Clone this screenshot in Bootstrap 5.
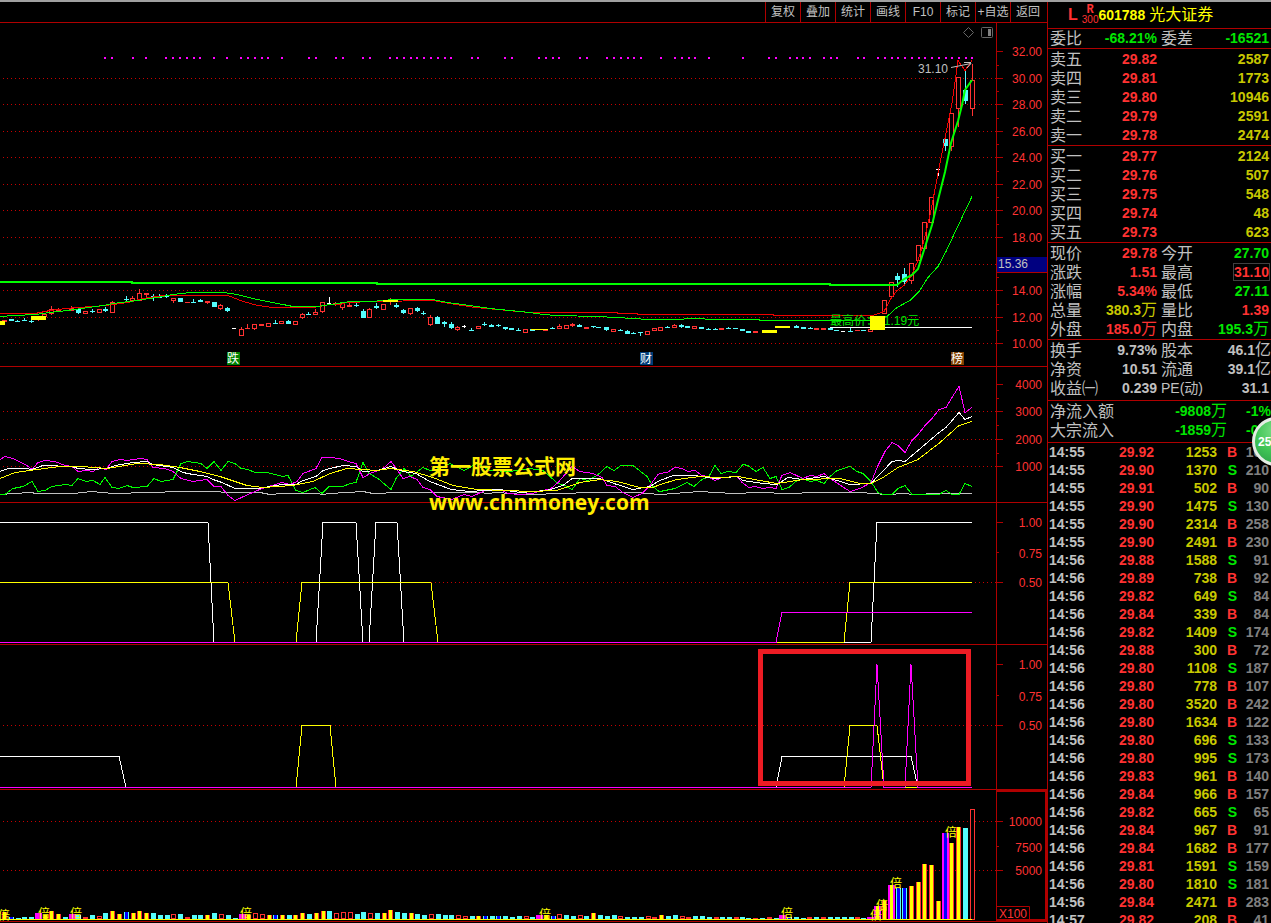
<!DOCTYPE html>
<html lang="zh-CN">
<head>
<meta charset="utf-8">
<meta name="viewport" content="width=device-width, initial-scale=1">
<title>601788 光大证券</title>
<link href="https://cdn.jsdelivr.net/npm/bootstrap@5.3.0/dist/css/bootstrap.min.css" rel="stylesheet">
<style>
  :root { --line:#b00000; --up:#ff3232; --down:#00e600; --vol:#c8c800; --ink:#c0c0c0; }
  body { background:#000; color:var(--ink); font-family:"Liberation Sans","Noto Sans CJK SC",sans-serif; font-size:14px; }
  .frame { border-top:2px solid #a0a0a0; }
  .toolbar { height:21px; border-bottom:1px solid var(--line); padding-right:2px; }
  .toolbar button { width:35px; padding:0; border:0; border-left:1px solid var(--line); background:none; color:var(--ink); font-size:12px; line-height:20px; white-space:nowrap; }
  .pane { border-bottom:1px solid var(--line); }
  .plot { min-width:0; }
  .plot svg, .scale svg { display:block; width:100%; }
  .scale { width:51px; border-left:1px solid var(--line); }
  .pane svg text { font-size:12px; }
  .scale text { fill:var(--up); text-anchor:end; }
  .h-price { height:343px; } .h-net { height:135px; } .h-sig { height:141px; } .h-buy { height:144px; } .h-volume { height:131px; }
  .side { width:224px; border-left:1px solid var(--line); }
  .side header { height:27px; border-bottom:1px solid var(--line); padding-left:20px; }
  .side table { width:100%; table-layout:fixed; border-collapse:separate; border-spacing:0; font-weight:700; white-space:nowrap; }
  .side th, .side td { padding:0; height:19px; line-height:19px; }
  .side th { font-size:16px; font-weight:400; padding-left:2px; }
  .side td { text-align:right; }
  .side td:last-child { padding-right:2px; }
  .side td.flush { padding-right:0; }
  .side th.latin { font-size:14px; }
  .block { border-bottom:1px solid var(--line); padding-top:1px; }
  .block.roomy { padding-bottom:2px; }
  .unit { font-size:16px; font-weight:400; line-height:1; }
  .ticks td { height:18px; line-height:18px; }
  .ticks td:first-child { text-align:left; padding-left:1px; }
  .up { color:var(--up); } .dn { color:var(--down); } .vo { color:var(--vol); } .dim { color:#808080; }
  .peak { outline:1px solid #404040; }
  .stock { color:#ff0; }
  .stock .name { font-size:16px; font-weight:400; }
  .flag-l { font-size:16px; } .flag-r { font:700 12px/10px "Liberation Mono",monospace; } .flag-n { font-size:10px; line-height:10px; }
  .orb { right:-30px; top:415px; width:49px; height:49px; border:3px solid #e4ece4; border-radius:50%; background:radial-gradient(circle at 50% 25%,#7fe08a,#3fc455 55%,#2c9c48); color:#fff; font-size:12px; font-weight:700; line-height:42px; padding:0 0 0 3px; text-align:left; }
</style>
</head>
<body class="vh-100 overflow-hidden">
<div class="frame d-flex vh-100 overflow-hidden position-relative">
  <main class="flex-grow-1 plot">
    <nav class="toolbar d-flex justify-content-end">
      <button type="button">复权</button><button type="button">叠加</button><button type="button">统计</button><button type="button">画线</button><button type="button">F10</button><button type="button">标记</button><button type="button">+自选</button><button type="button">返回</button>
    </nav>
    <section class="pane d-flex">
      <div class="plot flex-grow-1"><svg id="price" class="h-price" viewBox="0 23 996 343" preserveAspectRatio="xMaxYMin meet"></svg></div>
      <div class="scale"><svg id="priceScale" class="h-price" viewBox="997 23 50 343"></svg></div>
    </section>
    <section class="pane d-flex">
      <div class="plot flex-grow-1"><svg id="net" class="h-net overflow-visible" viewBox="0 367 996 135" preserveAspectRatio="xMaxYMin meet"></svg></div>
      <div class="scale"><svg id="netScale" class="h-net" viewBox="997 367 50 135"></svg></div>
    </section>
    <section class="pane d-flex">
      <div class="plot flex-grow-1"><svg id="sig" class="h-sig" viewBox="0 503 996 141" preserveAspectRatio="xMaxYMin meet"></svg></div>
      <div class="scale"><svg id="sigScale" class="h-sig" viewBox="997 503 50 141"></svg></div>
    </section>
    <section class="pane d-flex">
      <div class="plot flex-grow-1"><svg id="buy" class="h-buy" viewBox="0 645 996 144" preserveAspectRatio="xMaxYMin meet"></svg></div>
      <div class="scale"><svg id="buyScale" class="h-buy" viewBox="997 645 50 144"></svg></div>
    </section>
    <section class="pane d-flex">
      <div class="plot flex-grow-1"><svg id="volume" class="h-volume" viewBox="0 790 996 131" preserveAspectRatio="xMaxYMin meet"></svg></div>
      <div class="scale"><svg id="volumeScale" class="h-volume" viewBox="997 790 50 131"></svg></div>
    </section>
  </main>

  <aside class="side flex-shrink-0">
    <header class="d-flex align-items-center stock">
      <span class="flag-l up fw-bold me-1">L</span>
      <span class="d-flex flex-column align-items-center up"><b class="flag-r">R</b><span class="flag-n">300</span></span>
      <b class="me-1">601788</b><span class="name">光大证券</span>
    </header>
    <div class="block pt-0">
      <table><colgroup><col style="width:34px"><col style="width:75px"><col style="width:38px"><col></colgroup>
        <tr><th>委比</th><td class="dn">-68.21%</td><th class="ps-1">委差</th><td class="dn">-16521</td></tr></table>
    </div>
    <div class="block"><table id="asks"></table></div>
    <div class="block"><table id="bids"></table></div>
    <div class="block">
      <table><colgroup><col style="width:34px"><col style="width:75px"><col style="width:38px"><col></colgroup>
        <tr><th>现价</th><td class="up">29.78</td><th class="ps-1">今开</th><td class="dn">27.70</td></tr>
        <tr><th>涨跌</th><td class="up">1.51</td><th class="ps-1">最高</th><td class="up"><span class="peak">31.10</span></td></tr>
        <tr><th>涨幅</th><td class="up">5.34%</td><th class="ps-1">最低</th><td class="dn">27.11</td></tr>
        <tr><th>总量</th><td class="vo">380.3<span class="unit">万</span></td><th class="ps-1">量比</th><td class="up">1.39</td></tr>
        <tr><th>外盘</th><td class="up">185.0<span class="unit">万</span></td><th class="ps-1">内盘</th><td class="dn">195.3<span class="unit">万</span></td></tr></table>
    </div>
    <div class="block roomy">
      <table><colgroup><col style="width:50px"><col style="width:59px"><col style="width:48px"><col></colgroup>
        <tr><th>换手</th><td>9.73%</td><th class="ps-1">股本</th><td class="flush">46.1<span class="unit">亿</span></td></tr>
        <tr><th>净资</th><td>10.51</td><th class="ps-1">流通</th><td class="flush">39.1<span class="unit">亿</span></td></tr>
        <tr><th>收益㈠</th><td>0.239</td><th class="ps-1 latin">PE(动)</th><td>31.1</td></tr></table>
    </div>
    <div class="block roomy">
      <table><colgroup><col style="width:70px"><col style="width:109px"><col></colgroup>
        <tr><th>净流入额</th><td class="dn">-9808<span class="unit">万</span></td><td class="dn flush">-1%</td></tr>
        <tr><th>大宗流入</th><td class="dn">-1859<span class="unit">万</span></td><td class="dn flush">-0%</td></tr></table>
    </div>
    <table class="ticks" id="ticks"><colgroup><col style="width:60px"><col style="width:46px"><col style="width:63px"><col style="width:20px"><col></colgroup></table>
  </aside>
  <button type="button" class="orb position-absolute">25</button>
</div>

<script src="https://cdn.jsdelivr.net/npm/bootstrap@5.3.0/dist/js/bootstrap.bundle.min.js"></script>
<script>
const RED='#ff3232', CYAN='#54fcfc', LINE='#b00000', MAG='#ff00ff', YEL='#ffff00', GRN='#00ff00';
const $ = id => document.getElementById(id);
const rect = (x,y,w,h,f,extra='') => `<rect x="${x}" y="${y}" width="${w}" height="${h}" fill="${f}" ${extra}/>`;
const hollow = (x,y,w,h,c) => `<rect x="${x+.5}" y="${y+.5}" width="${w-1}" height="${Math.max(h-1,1)}" fill="#000" stroke="${c}"/>`;
const poly = (pts,c,w=1) => `<polyline points="${pts.map(p=>p.join()).join(' ')}" fill="none" stroke="${c}" stroke-width="${w}" shape-rendering="crispEdges"/>`;
const text = (x,y,s,c,extra='') => `<text x="${x}" y="${y}" fill="${c}" ${extra}>${s}</text>`;
const grid = ys => ys.map(y=>`<path d="M3 ${y+.5}H996" stroke="#c80000" stroke-dasharray="1 3" shape-rendering="crispEdges"/>`).join('');
/* curve samples are kept in thirds of a pixel, relative to the origin of their segment */
const curve = segs => segs.flatMap(([ox,oy,s]) => s.trim().split(/\s+/).map(p=>{const [x,y]=p.split(',');return [Math.round(ox+x/3),Math.floor(oy+y/3)+.5];}));

/* price pane */
/* centre, body top, body bottom, type, high, low; r rising, f small rising, c falling, w unchanged */
const candles = [
 [0,270,`13,150,156,r 34,147,153,c 51,153,156,c,150 73,150,153,c,144 94,153,156,c,149,158 115,138,150,f,138,153 133,133,141,r 154,118,132,r,108,135 175,117,123,f,114 214,114,122,f,108 235,117,129,c,117,132 256,123,132,r 277,123,126,c,117,129 298,117,129,r 316,117,123,c,112,126 337,96,129,r,93 358,96,99,f 379,87,90,c,78,93 397,84,93,r,78 418,69,92,r,57 439,69,75,f,69,81 460,78,81,c,72,93 478,80,83,c,72,84 499,78,81,c,72,84 520,84,93,r,84,98 541,84,96,c 562,96,99,f 580,96,99,c,87 601,90,96,c,87 622,94,99,f,94,102 643,96,111,c 661,105,117,r,102,120 682,114,123,c,110,126 702,174,177,w 724,177,198,r,171 742,174,177,f,162 763,162,177,r,162,180 784,162,168,f 805,159,171,r 826,159,162,c,150 844,153,162,r 865,153,162,c,150 886,153,165,r 907,132,144,r,129,147 925,132,135,c,126 946,126,135,r,117 967,96,126,r,96,129 988,99,102,w,81 1006,99,102,f,95,107`],
 [330,270,`37,99,114,r,99,120 58,105,110,f,98 79,105,108,c,99,111 100,123,144,c,117 118,117,144,r,114 139,108,114,c,99,117 160,102,120,r 181,90,93,f,84,105 199,105,111,c,99,114 220,120,129,c,117,132 241,114,132,r,114,135 262,114,123,c,111,126 280,129,132,c,123,135 301,141,165,r,135,168 322,141,162,c,138 343,156,162,c,153,171 364,162,174,c,156,177 382,171,180,r,168,183 403,168,171,w,165,174 424,180,183,c,174 445,168,177,r 463,162,165,c,156,168 484,165,171,c,162 505,165,168,c,162,171 526,171,177,c,171,180 544,174,180,c 565,180,183,c,174 586,177,189,r 607,177,183,c 646,177,183,f 667,174,177,c,171 688,168,177,r,162 709,165,177,r 727,162,168,f,159,171 748,165,171,c,162 769,171,177,f 790,168,171,c,168,174 805,171,174,c 829,171,180,c,171,183 850,177,186,r 871,180,183,c,177 892,183,192,c,180 910,189,192,c,186 931,186,189,c,186,198 952,183,195,r 973,174,183,r 991,171,183,r 1012,171,174,c,168`],
 [660,270,`43,165,174,r,162 64,165,171,c,162,174 82,168,174,c 103,168,177,r 124,171,177,c 145,177,180,c,174 166,177,180,c,174 184,174,180,f 205,174,177,c,171 226,174,177,c 247,177,183,c 265,183,189,c 286,183,189,f 409,168,174,c,165 430,171,177,c 451,174,177,c,171 469,174,180,f 490,174,180,f 511,174,180,c 528,180,183,c 549,183,186,w 571,183,186,c,174 592,180,184,f 610,180,183,c 631,177,186,r`],
 [820,50,`193,751,791,r 214,697,740,r 232,678,690,c,669,710 253,672,696,c,654,702 274,640,694,r,640,702 295,586,632,r 313,517,596,r 334,442,518,r 355,357,360,w,357,378 376,267,288,c,264,303 395,190,290,r,190,302 415,82,178,r,82,230 436,120,153,c,62,162 457,91,176,r,41,197`]];
let s = grid([78,104,131,157,184,210,237,264,290,317,343]);
for (const [ox,oy,d] of candles) for (const item of d.split(/\s+/)) {
  const [cx,a,b,t,hi,lo] = item.split(',');
  const x=Math.floor(ox+cx/3), Y=v=>Math.round(oy+v/3), y=Y(a), h=Math.max(1,Y(b)-y), c=t=='c'?CYAN:t=='w'?'#fff':RED;
  const top=Y(hi||a), bot=Y(lo||b);
  s += rect(x,top,1,Math.max(1,bot-top),c);
  s += t=='r' ? hollow(x-2,y,5,h,c) : rect(x-2,y,t=='w'?4:5,h,c);
}
s += poly(curve([[0,270,`0,130 105,130 150,121 225,113 288,110 340,103 385,97 430,86 490,77 685,77 730,94 775,107 820,112 940,112 990,104 1020,103`],
 [330,270,`50,97 130,94 310,92 360,100 435,113 500,119 600,127 860,127 865,130 920,130 925,133 1020,133`],[660,270,`338,133 342,136 640,136`],
 [820,50,`160,797 193,785 214,745 232,722 253,705 274,680 295,630 313,570 334,480 355,370 376,265 395,160 415,32 436,62 455,32`]]),'#f00000');
s += poly(curve([[0,270,`0,140 45,136 105,134 150,127 200,120 245,114 310,106 360,98 390,93 430,88 470,81 520,72 570,68 670,68 710,73 760,85 800,94 850,104 880,109 955,109 990,103 1020,99`],
 [330,270,`30,97 75,94 125,94 160,90 190,88 310,88 350,96 400,103 480,115 540,120 600,127 640,132 680,136 800,138 860,141 905,145 960,148 1020,149`],
 [660,270,`70,148 75,145 133,145 138,148 297,148 300,151 640,151`],[820,50,`200,800 232,772 270,750 298,725 325,682 355,648 378,605 400,560 457,438`]]),GRN);
s += `<path d="M0 282H132V283H377V284H830V285H897L904 279 912 275 918 269 925 247 932 225 938 200 945 172 951 143 958 121 962 105 965 90 972 80" fill="none" stroke="${GRN}" stroke-width="2"/>`;
s += text(830,325,'最高价：11.19元','#00e600') + rect(830,327,142,1,'#fff');
s += rect(0,321,5,4,YEL)+rect(31,316,15,4,YEL)+rect(383,300,15,2,YEL)+rect(531,329,17,1,YEL)+rect(762,330,15,3,YEL)+rect(775,326,15,2,YEL)+rect(870,316,15,14,YEL);
for (const x of [104,111,132,145,165,172,179,186,193,199,213,226,240,247,254,261,267,281,308,315,335,342,362,369,389,396,403,410,416,423,430,437,444,450,471,477,504,511,538,545,552,558,579,586,606,613,620,627,633,640,660,674,681,688,694,708,742,768,775,789,796,802,809,823,830,836,857,863,877,884,891,897,904,911,918,924,931,938,945,951,958,965,971]) s += rect(x,57,2,2,MAG);
s += text(918,73,'31.10','#c0c0c0') + `<path d="M951 67.5L971 63.5M964 62.5H971M967 68L971 63.5" fill="none" stroke="#c0c0c0"/>`;
for (const [x,c,t] of [[227,'#008000','跌'],[640,'#003c78','财'],[951,'#804000','榜']]) s += rect(x,352,13,13,c)+text(x,363,t,'#fff');
s += `<path d="M968.500 27.500L973.500 32.500 968.500 37.500 963.500 32.500Z" fill="none" stroke="#666"/><rect x="981.500" y="27.500" width="11" height="10" rx="1" fill="none" stroke="#666"/>`+rect(988,29,3,7,'#808080');
$('price').innerHTML = s;

/* flow pane */
s = grid([411,439,466]);
const O=[0,330,660], multi = (a,c)=>poly(curve(a.map((d,i)=>[O[i],370,d])),c);
s += multi([`0,373 90,367 110,371 220,370 275,364 340,371 450,368 540,364 780,366 810,373 850,370 950,370 970,374`,`0,370 100,365 130,370 210,366 250,368 450,366 470,371 500,368 580,372 720,371 760,367 920,367`,`0,373 120,365 220,370 300,366 380,370 470,366 600,366 680,373 735,370 760,373 840,371 935,370`],'#c0c0c0');
s += multi([`0,372 15,372 38,354 70,348 95,335 115,365 135,360 155,349 195,342 215,346 235,325 257,335 278,330 299,344 316,322 337,351 358,356 380,345 400,352 440,348 461,325 483,334 520,327 543,280 565,274 602,279 622,295 643,275 662,302 683,274 705,281 723,294 745,298 765,307 800,308 848,320 865,317 887,360 908,368 945,352 967,370 988,349`,`0,350 40,349 60,340 78,337 100,278 118,310 145,325 182,358 198,325 222,295 242,318 278,291 300,300 330,295 360,280 403,300 440,280 480,302 540,305 600,295 640,300 685,340 705,347 727,357 750,325 775,330 800,315 830,290 852,300 872,287 910,287 950,320 970,350 988,363`,`0,365 45,355 82,337 103,349 125,329 147,320 166,286 184,310 205,304 228,307 248,282 265,285 287,304 308,291 330,325 348,319 367,358 388,352 410,332 430,325 450,333 470,330 492,340 510,320 530,302 570,289 590,305 610,310 634,335 655,367 670,373 697,373 715,356 735,346 755,373 836,373 857,362 875,373 896,373 916,341 935,349`],GRN);
s += multi([`0,268 15,260 40,265 80,285 97,297 115,278 135,271 165,275 195,286 215,288 235,303 260,301 278,304 298,292 318,297 337,275 360,268 382,271 420,265 440,269 460,292 495,294 520,303 543,326 580,334 622,329 643,349 663,350 685,376 705,391 745,372 785,356 845,338 870,343 890,333 910,311 947,294 967,262`,`0,263 30,264 55,273 78,280 100,321 125,308 155,299 182,274 200,298 220,324 240,318 262,327 280,351 300,357 322,378 365,387 403,374 425,379 465,362 510,358 535,370 570,374 610,370 630,361 660,359 685,338 705,312 727,290 750,303 790,311 815,322 830,346 855,350 880,367 910,381 935,370 960,345 985,313`,`0,310 20,306 45,292 65,296 85,304 105,301 125,317 145,320 165,331 185,322 230,320 245,337 268,353 285,349 308,356 330,351 348,355 367,317 390,307 430,325 450,315 470,320 492,310 510,325 570,363 600,355 634,338 655,285 675,245 697,217 715,225 734,247 755,212 775,192 795,165 815,145 836,117 858,111 875,82 896,49 915,127 935,112`],MAG);
s += multi([`0,305 25,295 75,295 97,299 130,286 215,288 235,295 275,298 320,295 345,285 400,278 440,274 460,283 520,292 550,307 580,313 622,318 640,327 665,336 705,356 775,355 845,343 887,344 910,331 947,318 970,300`,`0,294 40,287 78,290 100,305 140,300 182,290 220,305 257,310 300,334 362,358 420,363 510,358 570,368 650,360 700,345 727,325 810,326 860,343 910,358 960,350 985,333`,`0,332 40,317 105,315 165,325 230,320 250,332 308,341 350,343 385,322 430,328 492,320 530,332 570,343 634,340 697,273 715,270 734,274 775,242 836,187 858,171 896,127 916,149 935,139`],'#fff');
s += multi([`0,325 45,306 110,299 180,289 245,290 320,296 410,281 480,282 540,291 600,305 660,320 740,347 790,352 880,346 940,334`,`0,310 50,295 100,297 140,301 180,294 250,303 310,322 370,345 440,358 530,361 600,364 680,362 750,338 810,328 860,335 930,353 970,351`,`0,343 50,328 120,319 180,323 235,320 300,332 350,340 430,327 540,325 600,340 634,340 670,322 715,292 775,267 840,217 896,166 935,155`],YEL);
s += text(429,474,'第一股票公式网','#ffee00','style="font-size:21px;font-weight:700"')+text(429,510,'www.chnmoney.com','#ffee00','style="font:700 21px \'Open Sans\',sans-serif"');
$('net').innerHTML = s;

/* signal panes */
const step = (d,c) => `<path d="${d}" transform="translate(0 .5)" fill="none" stroke="${c}" shape-rendering="crispEdges"/>`;
$('sig').innerHTML = grid([582]) + step('M0 522H208L214 642H316L323 522H356L363 642H369L376 522H397L404 642H871L877 522H972','#fff')
 + step('M0 582H228L235 642H296L302 582H431L438 642M776 642H844L850 582H972',YEL) + step('M0 642H776L782 612H972',MAG);
$('buy').innerHTML = grid([725]) + step('M0 756H119L126 787M776 787L782 756H911L918 787','#fff')
 + step('M296 787L302 725H330L336 787M844 787L850 725H877L884 787',YEL)
 + step('M0 787H871L877 664 884 787H905L911 664 918 787H972',MAG) + step('M905 787H917',YEL)
 + `<rect x="760.500" y="651.500" width="208" height="132" fill="none" stroke="#ed1c24" stroke-width="5"/>`;

/* volume pane: centre, height, type */
s = grid([821,870]);
const vols = `4,7,y 11,2,b 18,1,c 24,2,c 31,2,c 38,6,m 45,4,y 51,8,y 58,5,y 65,2,c 72,5,m 78,4,c 85,2,r 92,4,c 99,3,r 105,6,c 112,8,y 119,5,y 126,7,b 133,6,y 139,8,y 146,6,y 153,6,c 160,4,c 167,4,c 173,5,r 180,5,c 187,2,r 194,4,c 200,4,c 207,4,y 214,6,c 221,5,r 228,4,c 235,1,c 242,5,m 248,4,y 255,6,r 262,5,r 269,4,y 275,4,b 282,4,y 289,4,c 295,4,y 302,6,y 309,5,c 316,6,y 323,8,y 329,8,c 336,6,r 343,7,r 350,7,r 357,5,c 363,7,c 370,6,r 377,6,c 384,6,y 390,9,y 397,7,c 404,6,c 411,6,y 417,5,c 424,4,c 431,5,r 438,5,c 445,4,c 451,4,c 458,4,r 465,3,r 472,3,c 478,3,y 485,3,b 492,3,c 498,3,b 505,3,c 512,2,c 519,3,c 526,3,r 532,2,c 539,4,m 546,4,y 553,3,b 559,5,r 566,4,c 573,3,c 580,4,r 586,3,c 593,6,y 600,4,c 607,3,c 614,4,c 620,3,r 627,2,c 634,2,c 641,2,c 648,3,r 654,2,r 661,4,y 668,3,c 675,4,c 682,3,r 688,2,r 695,3,c 702,3,c 709,2,c 716,2,r 722,2,c 729,2,c 736,2,r 742,2,c 748,1,c 755,1,r 762,1,c 769,2,r 776,1,c 782,4,m 789,2,b 796,2,c 803,1,c 809,2,r 816,2,c 823,2,r 830,2,c 837,2,c 844,2,c 851,2,c 857,2,r 863,1,c 870,2,m 877,13,p 884,18,y 891,34,p 898,31,b 904,31,b 911,33,y 918,37,y 924,55,y 931,54,y 938,18,y 945,86,q 951,76,y 958,92,y 965,91,c`;
for (const v of vols.split(' ')) { let [x,h,t]=v.split(','); x=+x; h=+h; const y=919-h;
  if (t=='c') s+=rect(x-2,y,5,h,CYAN);
  else if (t=='r') s+=h<3?rect(x-2,y,5,h,RED):hollow(x-2,y,5,h,RED);
  else if (t=='y') s+=rect(x-2,y,5,h,RED)+rect(x-1,y,3,h,YEL);
  else if (t=='b') s+=rect(x-2,y,5,h,CYAN)+rect(x-1,y,3,h,'#0000ff');
  else { s+=rect(x-3,y,7,h,MAG); if(t!='m') s+=rect(x-1,y,3,h,t=='p'?YEL:'#0000ff'); } }
s += hollow(970,809,5,111,RED) + rect(0,919,972,1,YEL);
for (const [x,y] of [[-2,920],[38,918],[70,918],[240,918],[539,919],[781,918],[870,920],[876,910],[890,888],[945,837]]) s += text(x,y,'倍',YEL);
$('volume').innerHTML = s;

/* scales: [label, y] pairs, then minor tick rows */
const scale = (labels,minor) => labels.map(([t,y])=>rect(997,y,6,1,LINE)+text(1042,y+5,t,RED)).join('')+minor.map(y=>rect(997,y,2,1,LINE)).join('');
$('priceScale').innerHTML = scale([['32.00',51],['30.00',78],['28.00',104],['26.00',131],['24.00',157],['22.00',184],['20.00',210],['18.00',237],['14.00',290],['12.00',317],['10.00',343]],[65,91,118,144,171,197,224,277,304,330])
 + rect(997,257,50,15,'#000080')+rect(997,272,50,1,LINE)+text(998,268,'15.36','#c0c0c0','style="text-anchor:start;fill:#c0c0c0"');
$('netScale').innerHTML = scale([['4000',384],['3000',411],['2000',439],['1000',466]],[398,425,453]);
$('sigScale').innerHTML = scale([['1.00',522],['0.50',582]],[552])+text(1042,558,'0.75',RED);
$('buyScale').innerHTML = scale([['1.00',664],['0.50',725]],[695])+text(1042,701,'0.75',RED);
$('volumeScale').innerHTML = scale([['10000',821],['5000',870]],[846])+text(1042,852,'7500',RED)
 + `<path d="M997 791H1046V921M997 920H1046" fill="none" stroke="${LINE}" stroke-width="2"/><path d="M997 906.500H1029.500V920" fill="none" stroke="${LINE}"/>`+text(1027,918,'X100',RED);

/* order book */
const book = (id,rows) => $(id).innerHTML = '<colgroup><col style="width:34px"><col style="width:75px"><col></colgroup>'+rows.map(r=>`<tr><th>${r[0]}</th><td class="up">${r[1]}</td><td class="vo">${r[2]}</td></tr>`).join('');
book('asks',[['卖五','29.82',2587],['卖四','29.81',1773],['卖三','29.80',10946],['卖二','29.79',2591],['卖一','29.78',2474]]);
book('bids',[['买一','29.77',2124],['买二','29.76',507],['买三','29.75',548],['买四','29.74',48],['买五','29.73',623]]);
$('ticks').insertAdjacentHTML('beforeend', `55 92 1253 B 168|55 90 1370 S 210|55 91 502 B 90|55 90 1475 S 130|55 90 2314 B 258|55 90 2491 B 230|56 88 1588 S 91|56 89 738 B 92|56 82 649 S 84|56 84 339 B 84|56 82 1409 S 174|56 88 300 B 72|56 80 1108 S 187|56 80 778 B 107|56 80 3520 B 242|56 80 1634 B 122|56 80 696 S 133|56 80 995 S 173|56 83 961 B 140|56 84 966 B 157|56 82 665 S 65|56 84 967 B 91|56 84 1682 B 177|56 81 1591 S 159|56 80 1810 S 181|56 84 2471 B 283|57 82 208 B 41`.split('|').map(r=>{
  const [m,p,v,f,n]=r.split(' ');
  return `<tr><td>14:${m}</td><td class="up">29.${p}</td><td class="vo">${v}</td><td class="${f=='B'?'up':'dn'}">${f}</td><td class="dim">${n}</td></tr>`;}).join(''));
</script>
</body>
</html>
